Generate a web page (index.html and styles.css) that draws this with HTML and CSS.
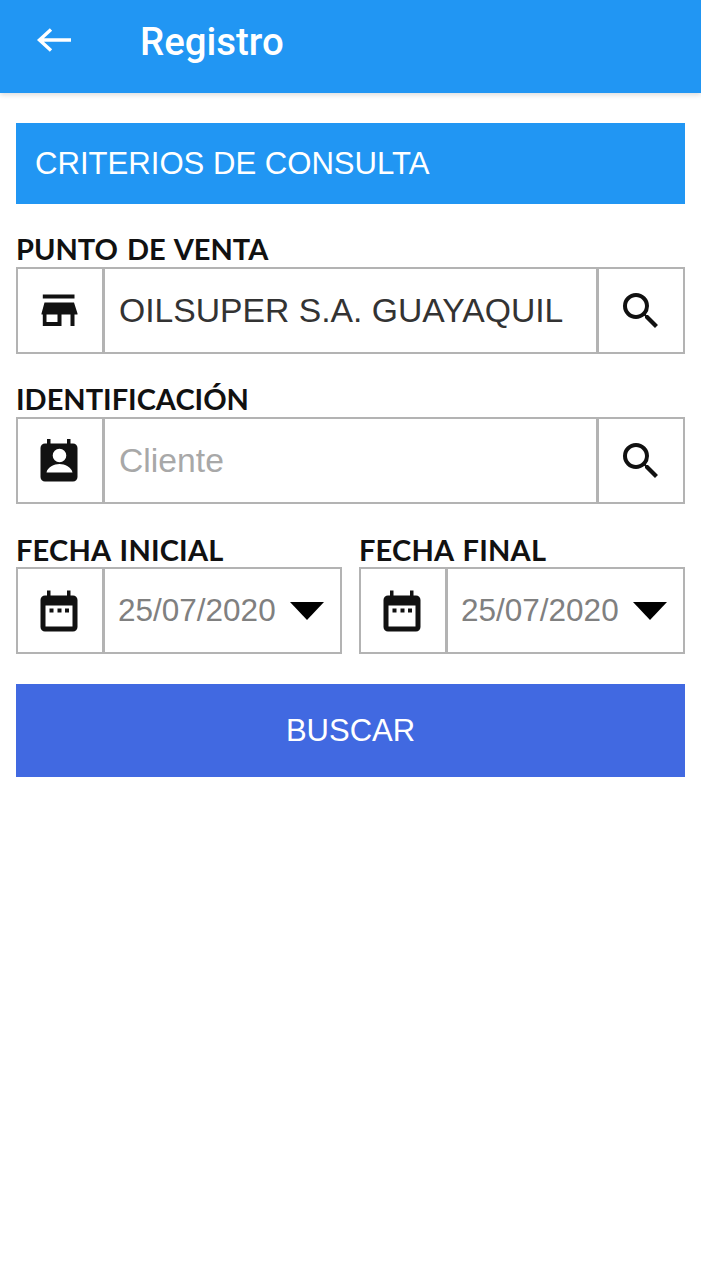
FILE: index.html
```html
<!DOCTYPE html>
<html lang="es">
<head>
<meta charset="utf-8">
<title>Registro</title>
<link rel="stylesheet" href="styles.css">
</head>
<body>
<header class="appbar">
  <svg class="back" viewBox="0 0 36 26" width="36" height="26"><path d="M35 13H4M15 2.500 3.500 13 15 23.500" fill="none" stroke="#fff" stroke-width="3.400"/></svg>
  <h1 class="title">Registro</h1>
</header>
<main class="content">
  <div class="band">CRITERIOS DE CONSULTA</div>

  <section class="field field-first">
    <div class="label">PUNTO DE VENTA</div>
    <div class="box">
      <div class="cell">
        <svg class="icon" viewBox="0 0 24 24"><path fill-rule="evenodd" d="M3.400 3.750h15.850v2H3.400zM4.250 7.750H19l1.750 5.500v.5h-1.500V19.500h-2v-5.750h-4.500V19.500H3.400v-5.750h-.65v-.5zM5.250 13.750v3.750h5.500v-3.750z"/></svg>
      </div>
      <div class="value">OILSUPER S.A. GUAYAQUIL</div>
      <div class="cell cell-end">
        <svg class="icon" viewBox="0 0 24 24"><path d="M15.500 14h-.79l-.28-.27A6.470 6.470 0 0 0 16 9.500 6.500 6.500 0 1 0 9.500 16c1.610 0 3.090-.59 4.230-1.570l.27.28v.79l5 4.990L20.490 19l-4.990-5zm-6 0C7.010 14 5 11.990 5 9.500S7.010 5 9.500 5 14 7.010 14 9.500 11.990 14 9.500 14z"/></svg>
      </div>
    </div>
  </section>

  <section class="field">
    <div class="label">IDENTIFICACIÓN</div>
    <div class="box">
      <div class="cell">
        <svg class="icon" viewBox="0 0 24 24"><path fill-rule="evenodd" d="M5.500 1h1.750v2.250h8.250V1h1.750v2.250h1.250a2.250 2.250 0 0 1 2.250 2.250v14.500a2.250 2.250 0 0 1-2.250 2.250H4.500a2.250 2.250 0 0 1-2.250-2.250V5.500A2.250 2.250 0 0 1 4.500 3.250h1zM11.750 5.850a3.400 3.400 0 1 0 0 6.800 3.400 3.400 0 0 0 0-6.800zM5.250 17.750h13c-.5-2.800-3.800-4.300-6.500-4.300s-6 1.500-6.500 4.300z"/></svg>
      </div>
      <div class="value placeholder">Cliente</div>
      <div class="cell cell-end">
        <svg class="icon" viewBox="0 0 24 24"><path d="M15.500 14h-.79l-.28-.27A6.470 6.470 0 0 0 16 9.500 6.500 6.500 0 1 0 9.500 16c1.610 0 3.090-.59 4.230-1.570l.27.28v.79l5 4.990L20.490 19l-4.990-5zm-6 0C7.010 14 5 11.990 5 9.500S7.010 5 9.500 5 14 7.010 14 9.500 11.990 14 9.500 14z"/></svg>
      </div>
    </div>
  </section>

  <div class="dates">
    <section class="field date">
      <div class="label">FECHA INICIAL</div>
      <div class="box">
        <div class="cell">
          <svg class="icon" viewBox="0 0 24 24"><path fill-rule="evenodd" d="M5.500 1.750h1.750v2.500h8.250v-2.500h1.750v2.500h1.250a2.250 2.250 0 0 1 2.250 2.250V20a2.250 2.250 0 0 1-2.250 2.250H4.500A2.250 2.250 0 0 1 2.250 20V6.500A2.250 2.250 0 0 1 4.500 4.250h1zM4.750 9.250V19.750h13.500V9.250zM6.750 10.750h2v2h-2zM10.750 10.750h2v2h-2zM14.500 10.750h2v2h-2z"/></svg>
        </div>
        <div class="value date-value">25/07/2020</div>
        <svg class="caret" viewBox="0 0 34 18" width="34" height="18"><path d="M0 0h34L17 18z"/></svg>
      </div>
    </section>
    <section class="field date">
      <div class="label">FECHA FINAL</div>
      <div class="box">
        <div class="cell">
          <svg class="icon" viewBox="0 0 24 24"><path fill-rule="evenodd" d="M5.500 1.750h1.750v2.500h8.250v-2.500h1.750v2.500h1.250a2.250 2.250 0 0 1 2.250 2.250V20a2.250 2.250 0 0 1-2.250 2.250H4.500A2.250 2.250 0 0 1 2.250 20V6.500A2.250 2.250 0 0 1 4.500 4.250h1zM4.750 9.250V19.750h13.500V9.250zM6.750 10.750h2v2h-2zM10.750 10.750h2v2h-2zM14.500 10.750h2v2h-2z"/></svg>
        </div>
        <div class="value date-value">25/07/2020</div>
        <svg class="caret" viewBox="0 0 34 18" width="34" height="18"><path d="M0 0h34L17 18z"/></svg>
      </div>
    </section>
  </div>

  <button class="search" type="button">BUSCAR</button>
</main>
</body>
</html>
```
FILE: styles.css
```css
* { box-sizing: border-box; }
html, body { margin: 0; padding: 0; background: #fff; }
body { width: 701px; height: 1280px; overflow: hidden; font-family: "Liberation Sans", Arial, sans-serif; }

.appbar {
  height: 93px;
  background: #2196f3;
  display: flex;
  align-items: center;
  padding: 0 0 9px 36px;
  box-shadow: 0 2px 5px rgba(0, 0, 0, .14);
}
.back { flex: none; margin-bottom: 4px; }
.title {
  margin: 0 0 0 68px;
  font: 500 38.400px/1 Roboto, sans-serif;
  color: #fff;
}

.content { padding: 30px 16px 0; }

.band {
  height: 81px;
  background: #2196f3;
  color: #fff;
  font-size: 31.100px;
  line-height: 81px;
  padding-left: 19px;
}

.field { margin-top: 30px; }
.field-first { margin-top: 30px; }
.label {
  font: 700 29px/33px Lato, sans-serif;
  word-spacing: 2px;
  color: #111;
  height: 33px;
  margin-top: -2px;
  margin-bottom: 2px;
}
.date .label {
  letter-spacing: .2px;
  margin-top: -1px;
  margin-bottom: 1px;
}
.box {
  display: flex;
  align-items: center;
  height: 87px;
  border: 2px solid #b3b3b3;
  background: #fff;
}
.cell {
  flex: none;
  width: 87px;
  height: 100%;
  border-right: 3px solid #b3b3b3;
  display: flex;
  align-items: center;
  justify-content: center;
}
.cell-end { width: 87px; border-right: 0; border-left: 3px solid #b3b3b3; }
.icon { width: 48px; height: 48px; fill: #111; }
.value {
  flex: 1;
  min-width: 0;
  padding-left: 14px;
  font-size: 33.700px;
  color: #333;
  white-space: nowrap;
}
.placeholder { color: #a8a8a8; }

.dates { display: flex; gap: 17px; margin-top: 30px; }
.date { flex: 1; margin-top: 0; }
.date-value { color: #808080; font-size: 31.500px; padding-left: 13px; }
.caret { flex: none; margin: 0 16px 0 0; fill: #000; }

.search {
  display: block;
  width: 100%;
  height: 93px;
  margin-top: 30px;
  border: 0;
  background: #4169e1;
  color: #fff;
  font: 400 31px "Liberation Sans", Arial, sans-serif;
}
```
